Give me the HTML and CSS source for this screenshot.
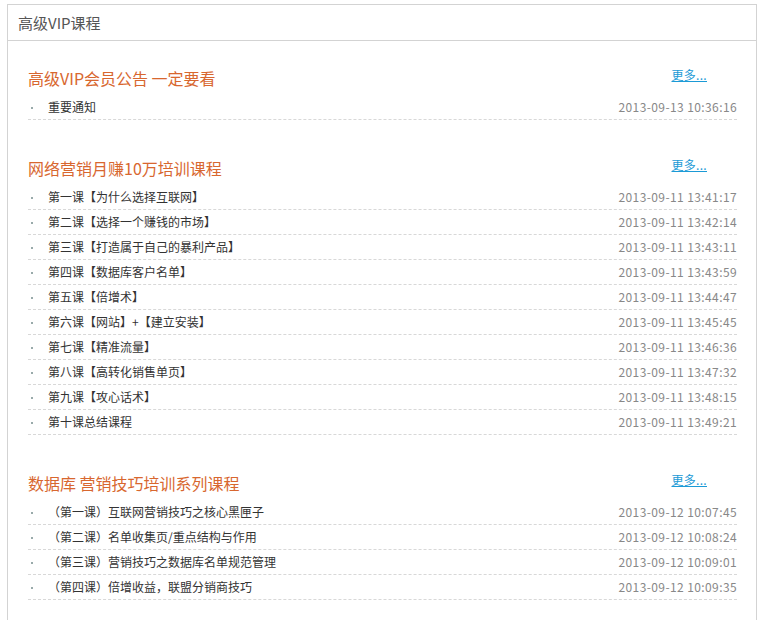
FILE: index.html
```html
<!DOCTYPE html>
<html lang="zh-CN">
<head>
    <meta charset="UTF-8">
    <title>高级VIP课程</title>
    <link rel="stylesheet" href="styles.css">
</head>
<body>
    <div class="panel">
        <div class="panel-head">高级VIP课程</div>
        <div class="panel-body">

            <div class="section">
                <div class="section-title">
                    <h3>高级VIP会员公告 一定要看</h3>
                    <a href="#" class="more">更多...</a>
                </div>
                <ul class="list">
                    <li><a href="#">重要通知</a><span class="date">2013-09-13 10:36:16</span></li>
                </ul>
            </div>

            <div class="section">
                <div class="section-title">
                    <h3>网络营销月赚10万培训课程</h3>
                    <a href="#" class="more">更多...</a>
                </div>
                <ul class="list">
                    <li><a href="#">第一课【为什么选择互联网】</a><span class="date">2013-09-11 13:41:17</span></li>
                    <li><a href="#">第二课【选择一个赚钱的市场】</a><span class="date">2013-09-11 13:42:14</span></li>
                    <li><a href="#">第三课【打造属于自己的暴利产品】</a><span class="date">2013-09-11 13:43:11</span></li>
                    <li><a href="#">第四课【数据库客户名单】</a><span class="date">2013-09-11 13:43:59</span></li>
                    <li><a href="#">第五课【倍增术】</a><span class="date">2013-09-11 13:44:47</span></li>
                    <li><a href="#">第六课【网站】+【建立安装】</a><span class="date">2013-09-11 13:45:45</span></li>
                    <li><a href="#">第七课【精准流量】</a><span class="date">2013-09-11 13:46:36</span></li>
                    <li><a href="#">第八课【高转化销售单页】</a><span class="date">2013-09-11 13:47:32</span></li>
                    <li><a href="#">第九课【攻心话术】</a><span class="date">2013-09-11 13:48:15</span></li>
                    <li><a href="#">第十课总结课程</a><span class="date">2013-09-11 13:49:21</span></li>
                </ul>
            </div>

            <div class="section">
                <div class="section-title">
                    <h3>数据库 营销技巧培训系列课程</h3>
                    <a href="#" class="more">更多...</a>
                </div>
                <ul class="list">
                    <li><a href="#">（第一课）互联网营销技巧之核心黑匣子</a><span class="date">2013-09-12 10:07:45</span></li>
                    <li><a href="#">（第二课）名单收集页/重点结构与作用</a><span class="date">2013-09-12 10:08:24</span></li>
                    <li><a href="#">（第三课）营销技巧之数据库名单规范管理</a><span class="date">2013-09-12 10:09:01</span></li>
                    <li><a href="#">（第四课）倍增收益，联盟分销商技巧</a><span class="date">2013-09-12 10:09:35</span></li>
                </ul>
            </div>

        </div>
    </div>
</body>
</html>
```

FILE: styles.css
```css
body {
    margin: 0;
    background-color: #fff;
    font-family: "Noto Sans CJK SC", "Open Sans", sans-serif;
    font-size: 12px;
    color: #333;
}
.panel {
    margin: 4px 6px 0 7px;
    border: 1px solid #d3d3d3;
    border-bottom: none;
    height: 640px;
}
.panel-head {
    height: 35px;
    line-height: 35px;
    padding-left: 10px;
    font-size: 15px;
    color: #555;
    border-bottom: 1px solid #d3d3d3;
}
.panel-body {
    padding: 24px 19px 0 20px;
}
.section {
    margin-bottom: 35px;
}
.section-title {
    display: flex;
    justify-content: space-between;
    align-items: flex-start;
    height: 30px;
}
.section-title h3 {
    margin: 0;
    font-size: 16px;
    font-weight: normal;
    line-height: 26px;
    color: #d8672f;
}
.more {
    margin-right: 30px;
    line-height: 20px;
    color: #1b9ad6;
    text-decoration: underline;
    letter-spacing: 0.3px;
}
.list {
    list-style: none;
    margin: 0;
    padding: 0;
}
.list li {
    display: flex;
    justify-content: space-between;
    height: 24px;
    line-height: 24px;
    border-bottom: 1px dashed #d8d8d8;
    padding-left: 20px;
    position: relative;
}
.list li::before {
    content: "";
    position: absolute;
    left: 3px;
    top: 12px;
    width: 2px;
    height: 2px;
    background-color: #9aa;
}
.list li a {
    color: #333;
    text-decoration: none;
}
.date {
    color: #888;
    letter-spacing: 0.4px;
}
```
